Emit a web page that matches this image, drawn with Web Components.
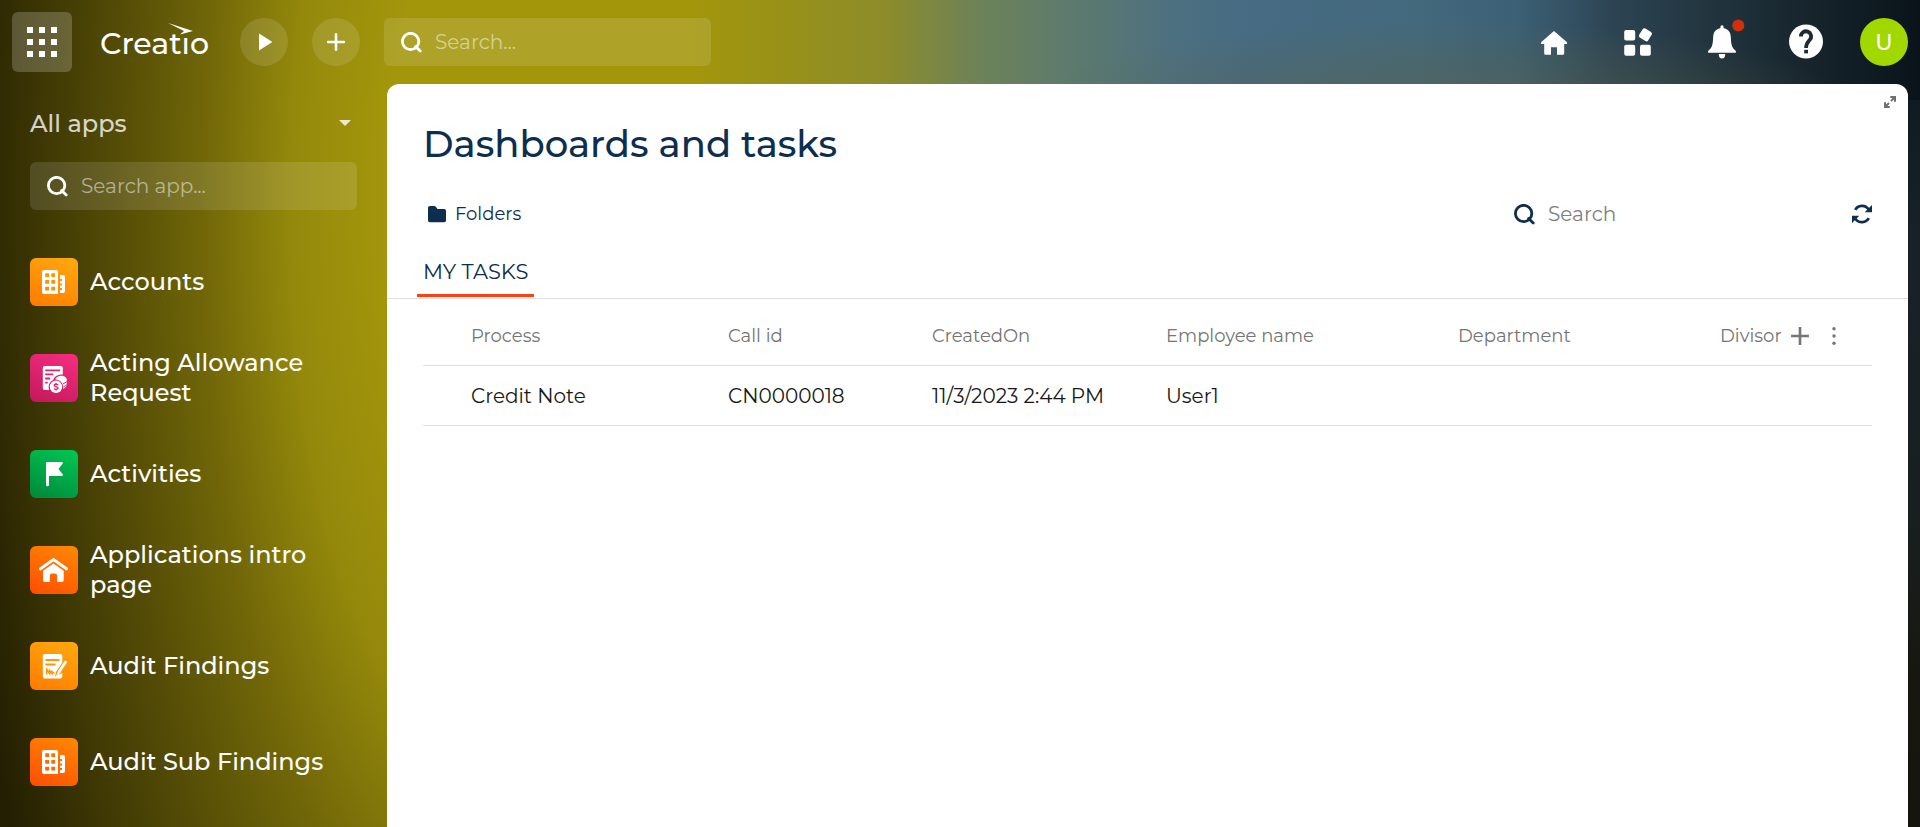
<!DOCTYPE html>
<html lang="en">
<head>
<meta charset="utf-8">
<title>Creatio</title>
<style>
  body {
    margin: 0;
    min-height: 100vh;
    font-family: Montserrat, Inter, "Open Sans", sans-serif;
    background:
      radial-gradient(420px 90px at 75% 110px, rgba(92, 98, 70, .6), rgba(92, 98, 70, 0)),
      linear-gradient(90deg, rgba(163, 150, 11, 0) 24%, #a3960b 31%, #a3960b 36%, #999216 40%, #8d8c2a 46%, #6d8258 51%, #5f7c6b 55%, #4d7080 61%, #466b83 65%, #43697d 74%, #3c6075 79%, #2c4453 84%, #22353f 89%, #17252d 94%, #0a131a 100%) top / 100% 100px no-repeat,
      linear-gradient(180deg, #0e1a21 80px, #182128 240px, #191f20 500px, #17160f 700px, #15140e) right / 24px 100% no-repeat,
      radial-gradient(520px 1400px at 500px 200px, #a3960b 0%, #a3960b 22%, #94890b 40%, #6f6508 58%, #544c06 74%, #3b3504 90%, #241f02 104%);
  }
</style>
</head>
<body>
<app-shell>
  <app-header slot="header"></app-header>
  <app-sidebar slot="sidebar">
    <app-link icon="building" tone="amber">Accounts</app-link>
    <app-link icon="invoice" tone="pink">Acting Allowance Request</app-link>
    <app-link icon="flag" tone="green">Activities</app-link>
    <app-link icon="house" tone="orange">Applications intro page</app-link>
    <app-link icon="audit" tone="amber">Audit Findings</app-link>
    <app-link icon="building" tone="orange">Audit Sub Findings</app-link>
  </app-sidebar>
  <dashboard-panel heading="Dashboards and tasks">
    <task-table></task-table>
  </dashboard-panel>
</app-shell>

<script>
const ICONS = {
  grid: [60, 60, '<path fill="currentColor" d="M15 15h6v6h-6zM27 15h6v6h-6zM39 15h6v6h-6zM15 27h6v6h-6zM27 27h6v6h-6zM39 27h6v6h-6zM15 39h6v6h-6zM27 39h6v6h-6zM39 39h6v6h-6z"/>'],
  play: [48, 48, '<path fill="currentColor" d="M19 15.6v16.8L32.4 24z"/>'],
  plus: [48, 48, '<path fill="none" stroke="currentColor" stroke-width="2.6" stroke-linecap="round" d="M24 16.2v15.6M16.2 24h15.6"/>'],
  search: [21, 21, '<circle cx="9.6" cy="9.5" r="8.2" fill="none" stroke="currentColor" stroke-width="2.8"/><path fill="none" stroke="currentColor" stroke-width="2.8" stroke-linecap="round" d="m14.6 14.4 4.6 4.6"/>'],
  caret: [12, 6, '<path fill="currentColor" d="M0 0h12L6 6z"/>'],
  home: [48, 48, '<path fill="currentColor" d="M24 13 36.7 24q.9 1 .1 2H34.2v9.400q0 1.300-1.300 1.300H27v-7.500h-6v7.500h-5.500q-1.300 0-1.300-1.300V26h-2.900q-.9-1 .1-2z"/>'],
  widgets: [48, 48, '<g fill="currentColor"><rect x="10.200" y="12" width="11" height="10.500" rx="2"/><rect x="10.200" y="26.700" width="11" height="11" rx="2"/><rect x="26" y="26.700" width="10.800" height="11" rx="2"/><rect x="26.100" y="11.500" width="10.600" height="10.600" rx="2" transform="rotate(32 31.400 16.800)"/></g>'],
  bell: [48, 48, '<path fill="currentColor" d="M22.400 10.200V8.900a1.600 1.600 0 0 1 3.200 0v1.300c4.500.7 6.900 3.700 7.200 8.300.3 6.300.5 11 4.600 14q.9.8.4 2.300H10.200q-.5-1.500.4-2.300c4.100-3 4.300-7.700 4.600-14 .3-4.600 2.700-7.600 7.200-8.300zM20.800 36h6.400a3.200 4.600 0 0 1-6.400 0z"/><circle cx="40.300" cy="7.500" r="6" fill="#d32f0c"/>'],
  help: [48, 48, '<circle cx="24" cy="23.500" r="17" fill="currentColor"/><path fill="none" stroke="#1d2b33" stroke-width="3.800" d="M18.900 18.500a5.100 5.100 0 1 1 8.900 3.300c-2.300 2.500-3.700 3.500-3.700 8.200"/><path fill="#1d2b33" d="M22.200 31.800H26v3.600h-3.800z"/>'],
  expand: [14, 14, '<g fill="none" stroke="#6f6f6f" stroke-width="2"><path d="m12 2-4 4M2 12l4-4"/></g><path fill="#6f6f6f" d="M7.300 1H13v5.700h-2V3H7.300zM6.700 13H1V7.300h2V11h3.700z"/>'],
  folder: [18, 17, '<path fill="currentColor" d="M1.800 0h4.700q.8 0 1.300.7L9.500 3h6.700q1.800 0 1.800 1.800v9.700q0 1.800-1.800 1.800H1.800Q0 16.300 0 14.500V1.800Q0 0 1.800 0z"/>'],
  refresh: [20, 20, '<g fill="none" stroke="currentColor" stroke-width="2.600"><path d="M3.200 5.800C5.800 1 13 .2 16.800 5.600M16.800 14.200C14.200 19 7 19.800 3.200 14.400"/></g><path fill="currentColor" d="M20 1v7.300h-7.300zM0 19v-7.300h7.300z"/>'],
  add: [18, 18, '<path fill="none" stroke="currentColor" stroke-width="2.600" d="M9 0v18M0 9h18"/>'],
  dots: [18, 18, '<g fill="currentColor"><circle cx="9" cy="1.800" r="1.700"/><circle cx="9" cy="9" r="1.700"/><circle cx="9" cy="16.200" r="1.700"/></g>'],
  building: [48, 48, '<path fill="#fff" fill-rule="evenodd" d="M14 12h12q2 0 2 2v22H14q-2 0-2-2V14q0-2 2-2zM15.200 15.300v3.800H19v-3.800zM21.300 15.300v3.800h3.800v-3.800zM15.200 22v3.800H19V22zM21.300 22v3.800h3.800V22zM15.200 28.700v3.800H19v-3.800zM21.300 28.700v3.800h3.800v-3.800z"/><path fill="#fff" d="M30 17h3q2 0 2 2v14q0 2-2 2h-3v-3h2v-2h-2v-2.500h2v-2h-2V23h2v-2h-2z"/>'],
  invoice: [48, 48, '<path fill="#fff" fill-rule="evenodd" d="M14.800 12h16q2 0 2 2v6.500c-5 0-9 2-9.500 5.500-4.500 2-5.300 6.500-4 10h-4.500q-2 0-2-2V14q0-2 2-2zM15.200 15.500v1.800h15v-1.800zM15.200 19.500v1.800h8v-1.800zM15.200 23.600v1.800h5v-1.800zM15.200 27.700v1.800h2.500v-1.800z"/><circle cx="26" cy="32.800" r="6.200" fill="#fff"/><path fill="none" stroke="#e0266f" stroke-width="1.400" d="M28 31c-.8-1-3.800-1-3.800.4 0 1.500 3.900 1.100 3.900 2.700 0 1.500-3.100 1.500-4.100.4M26 29v1.500M26 35v1.500"/><path fill="#fff" d="M25.200 25.300c1-2.300 3.400-3.500 6-3.500 3 0 5.500 1.600 5.500 4v4.500c0 2.500-1.600 4-3.700 4.500.8-4.500-1.600-8.300-7.800-9.500z"/><path fill="none" stroke="#e0266f" stroke-width="1" d="M33 29.500q2.300-.4 3.700-1.800M33.500 32.500q2-.4 3.200-1.600"/>'],
  flag: [48, 48, '<path fill="#fff" d="M17 12h15q1.500.3.700 1.600L28.500 19l4.200 5.200q.8 1.500-.7 1.800H19v8.700a1.500 1.500 0 0 1-3 0V13q0-1 1-1z"/>'],
  house: [48, 48, '<path fill="none" stroke="#fff" stroke-width="3" stroke-linecap="round" d="M10.500 22.800 23.500 13.500l13 9.300"/><path fill="#fff" d="m23.500 17.600 10.200 7.200V34q0 2-2 2h-4.500v-6q0-2.600-2.600-2.600h-2.200q-2.600 0-2.600 2.600v6h-4.800q-2 0-2-2v-9.200z"/>'],
  audit: [48, 48, '<path fill="#fff" fill-rule="evenodd" d="M14.800 12h15.500q2 0 2 2v6.500L26 30l-1 4.500 7.300-3.500v3.500q0 2-2 2H14.800q-2 0-2-2V14q0-2 2-2zM15.500 17v2h14v-2zM15.500 21.500v2h10v-2z"/><path fill="none" stroke="#ff9505" stroke-width="1.500" d="M16.800 32.500v-5l2.800 4v-3l2.400 3v-2l2.500 2"/><path fill="none" stroke="#fff" stroke-width="2.800" stroke-linecap="round" d="m35.600 20-6.300 9.500"/><path fill="#fff" d="m28.200 28.800 2.400 1.700-3.600 3.700-1 .1z"/>']
};

class BaseElement extends HTMLElement {
  connectedCallback() {
    if (this.shadowRoot) return;
    const sheet = '*{box-sizing:border-box}button{border:0;padding:0;background:none;color:inherit;font:inherit;cursor:pointer}';
    this.attachShadow({ mode: 'open' }).innerHTML = `<style>${sheet}${this.styles()}</style>${this.markup()}`;
  }
}

customElements.define('ui-icon', class extends BaseElement {
  styles() { return ':host{display:block;flex:none}svg{display:block}'; }
  markup() {
    const [w, h, body] = ICONS[this.getAttribute('name')];
    return `<svg width="${w}" height="${h}" viewBox="0 0 ${w} ${h}" aria-hidden="true">${body}</svg>`;
  }
});

customElements.define('search-field', class extends BaseElement {
  styles() {
    return `:host{display:block;color:#fff;--fill:rgba(255,255,255,.12);--hint:rgba(255,255,255,.5);--pad:17px}
      label{display:flex;align-items:center;gap:13px;height:48px;padding:0 var(--pad);border-radius:6px;background:var(--fill)}
      input{flex:1;min-width:0;border:0;outline:0;padding:0;background:none;color:inherit;font:inherit;font-size:20px;line-height:28px}
      input::placeholder{color:var(--hint);opacity:1}`;
  }
  markup() {
    const hint = this.getAttribute('hint');
    return `<label><ui-icon name="search"></ui-icon><input type="text" placeholder="${hint}" aria-label="${hint}"></label>`;
  }
});

customElements.define('brand-logo', class extends BaseElement {
  styles() {
    return `:host{display:block;color:#fff}
      a{display:block;position:relative;width:110px;padding-top:4px;color:inherit;text-decoration:none;font-size:30px;line-height:40px;font-weight:500}
      svg{position:absolute;left:68px;top:3px}`;
  }
  markup() {
    return `<a href="#" aria-label="Creatio">Creat\u0131o<svg width="26" height="12" viewBox="0 0 26 12" aria-hidden="true"><path fill="#fff" d="M0 0 25 8 12 11.500 16 8z"/></svg></a>`;
  }
});

customElements.define('app-header', class extends BaseElement {
  styles() {
    return `:host{display:flex;align-items:center;height:84px;padding:0 12px;color:#fff}
      .apps{width:60px;height:60px;border-radius:6px;background:rgba(255,255,255,.2)}
      brand-logo{margin:0 30px 0 28px}
      .round{width:48px;height:48px;border-radius:50%;background:rgba(255,255,255,.12);margin-right:24px}
      search-field{width:327px}
      nav{display:flex;gap:36px;margin-left:auto;margin-right:30px}
      nav button{width:48px;height:48px}
      .user{width:48px;height:48px;border-radius:50%;background:#a0d800;font-size:22px;font-weight:500}`;
  }
  markup() {
    return `<button class="apps" aria-label="Apps"><ui-icon name="grid"></ui-icon></button>
      <brand-logo></brand-logo>
      <button class="round" aria-label="Run process"><ui-icon name="play"></ui-icon></button>
      <button class="round" aria-label="Add"><ui-icon name="plus"></ui-icon></button>
      <search-field hint="Search..."></search-field>
      <nav>
        <button aria-label="Home"><ui-icon name="home"></ui-icon></button>
        <button aria-label="Widgets"><ui-icon name="widgets"></ui-icon></button>
        <button aria-label="Notifications"><ui-icon name="bell"></ui-icon></button>
        <button aria-label="Help"><ui-icon name="help"></ui-icon></button>
      </nav>
      <button class="user">U</button>`;
  }
});

customElements.define('app-sidebar', class extends BaseElement {
  styles() {
    return `:host{display:block;padding:24px 30px 16px;color:#fff}
      .pick{display:flex;align-items:center;justify-content:space-between;width:100%;height:30px;padding-right:6px;margin-bottom:24px;font-size:24px;font-weight:500;color:rgba(255,255,255,.8)}
      nav{margin-top:24px}`;
  }
  markup() {
    return `<button class="pick">All apps<ui-icon name="caret"></ui-icon></button>
      <search-field hint="Search app..."></search-field>
      <nav><slot></slot></nav>`;
  }
});

customElements.define('app-link', class extends BaseElement {
  styles() {
    return `:host{display:block}
      a{display:flex;align-items:center;gap:12px;min-height:96px;color:#fff;text-decoration:none;font-size:24px;line-height:30px;font-weight:500}
      .tile{flex:none;width:48px;height:48px;border-radius:6px}
      .amber{background:linear-gradient(25deg,#ff7a00,#ffab0f)}
      .pink{background:linear-gradient(25deg,#c2185b,#f82d82)}
      .green{background:linear-gradient(25deg,#00873a,#00c853)}
      .orange{background:linear-gradient(25deg,#ff4d00,#ff8a00)}`;
  }
  markup() {
    return `<a href="#"><span class="tile ${this.getAttribute('tone')}"><ui-icon name="${this.getAttribute('icon')}"></ui-icon></span><span><slot></slot></span></a>`;
  }
});

customElements.define('dashboard-panel', class extends BaseElement {
  styles() {
    return `:host{display:block;position:relative;padding-top:36px;border-radius:12px 12px 0 0;background:#fff;color:#0d2e4e}
      .expand{position:absolute;top:11px;right:11px}
      h1{margin:0 36px 22px;font-size:37px;line-height:48px;font-weight:500}
      .bar{display:flex;align-items:center;height:48px;margin:0 36px}
      .folders{display:flex;align-items:center;gap:9px;padding-left:5px;font-size:18px}
      search-field{width:320px;margin-left:auto;margin-right:18px;color:inherit;--fill:none;--hint:#7f7f7f;--pad:0px}
      .tabs{display:flex;margin-top:12px;padding:0 30px 1px;border-bottom:1px solid #e0e0e0}
      .tabs button{padding:0 6px;border-bottom:3px solid #ff4013;font-size:21px;line-height:44px}
      main{padding:7px 36px 36px}`;
  }
  markup() {
    return `<button class="expand" aria-label="Expand"><ui-icon name="expand"></ui-icon></button>
      <h1>${this.getAttribute('heading')}</h1>
      <div class="bar">
        <button class="folders"><ui-icon name="folder"></ui-icon>Folders</button>
        <search-field hint="Search"></search-field>
        <button aria-label="Refresh"><ui-icon name="refresh"></ui-icon></button>
      </div>
      <div class="tabs" role="tablist"><button role="tab" aria-selected="true">MY TASKS</button></div>
      <main><slot></slot></main>`;
  }
});

customElements.define('task-table', class extends BaseElement {
  styles() {
    return `:host{display:block}
      table{width:100%;table-layout:fixed;border-collapse:separate;border-spacing:0}
      th,td{height:60px;padding:0 0 0 12px;border-bottom:1px solid #e0e0e0;text-align:left;font-weight:400;white-space:nowrap;overflow:hidden}
      th{font-size:18px;color:#757575}
      td{font-size:20px;color:#181818}
      .select{width:36px}.process{width:257px}.call{width:204px}.created{width:234px}.employee{width:292px}.department{width:262px}.divisor{width:76px}
      th.actions{padding-left:7px}
      .tools{display:flex;gap:16px}`;
  }
  markup() {
    return `<table>
      <thead><tr><th class="select"></th><th class="process">Process</th><th class="call">Call id</th><th class="created">CreatedOn</th><th class="employee">Employee name</th><th class="department">Department</th><th class="divisor">Divisor</th>
      <th class="actions"><div class="tools"><button aria-label="Add column"><ui-icon name="add"></ui-icon></button><button aria-label="More"><ui-icon name="dots"></ui-icon></button></div></th></tr></thead>
      <tbody><tr><td></td><td>Credit Note</td><td>CN0000018</td><td>11/3/2023 2:44 PM</td><td>User1</td><td></td><td></td><td></td></tr></tbody>
    </table>`;
  }
});

customElements.define('app-shell', class extends BaseElement {
  styles() {
    return `:host{display:grid;grid-template:auto 1fr / 387px minmax(0,1fr);min-height:100vh;padding-right:12px}
      header{grid-column:1 / -1;margin-right:-12px}
      .content{display:grid}`;
  }
  markup() {
    return `<header><slot name="header"></slot></header><aside><slot name="sidebar"></slot></aside><div class="content"><slot></slot></div>`;
  }
});
</script>
</body>
</html>
